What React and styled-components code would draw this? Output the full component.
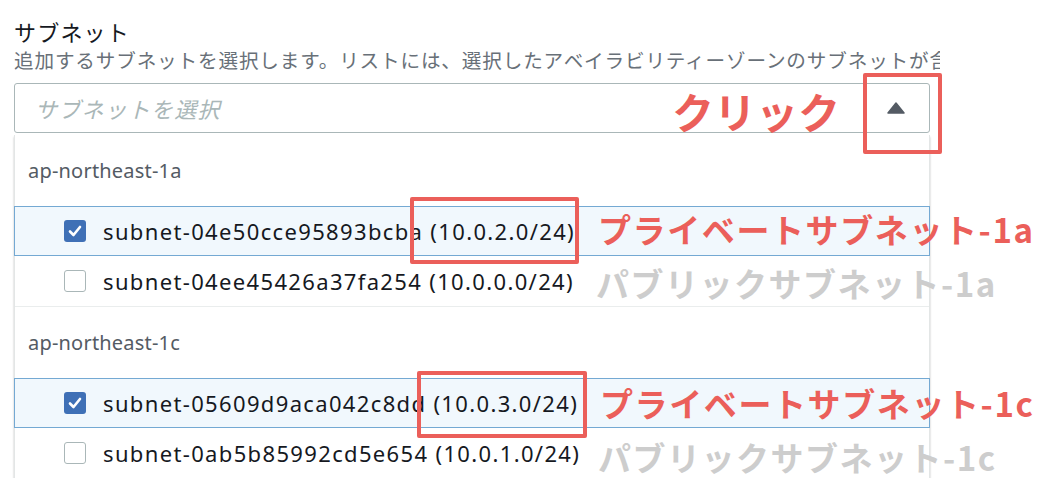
import React from "react";
import styled, { createGlobalStyle } from "styled-components";

const GlobalStyle = createGlobalStyle`
  body {
    margin: 0;
    background: #ffffff;
    font-family: "Noto Sans", "Noto Sans CJK JP", sans-serif;
  }
`;

const Page = styled.div`
  position: relative;
  width: 1046px;
  height: 500px;
  overflow: hidden;
`;

// スクリーンショット部分（右端で切れている）
const Shot = styled.div`
  width: 940px;
  overflow: hidden;
  padding: 17px 0 0 14px;
  box-sizing: border-box;
`;

const Field = styled.div`
  width: 916px;
`;

const Title = styled.div`
  font-size: 22px;
  line-height: 30px;
  color: #16191f;
  letter-spacing: 1.2px;
`;

const Desc = styled.div`
  font-size: 19.6px;
  line-height: 28px;
  color: #687078;
  white-space: nowrap;
  letter-spacing: 0.85px;
`;

const Select = styled.div`
  margin-top: 8px;
  height: 50px;
  border: 1px solid #aab7b8;
  border-radius: 3px;
  box-sizing: border-box;
  display: flex;
  align-items: center;
  justify-content: space-between;
  padding: 0 24px 0 20px;
`;

const Placeholder = styled.span`
  font-style: italic;
  font-size: 22px;
  color: #aab7b8;
  letter-spacing: 1.2px;
`;

const Panel = styled.div`
  margin-top: 2px;
  border-left: 1px solid #e3e6e6;
  border-right: 1px solid #e3e6e6;
  box-shadow: 0 2px 2px rgba(0, 0, 0, 0.25);
  background: #fff;
`;

const Group = styled.div`
  border-top: ${(p) => (p.$first ? "none" : "1px solid #eaeded")};
`;

const GroupHeader = styled.div`
  height: 71px;
  display: flex;
  align-items: center;
  padding-left: 13px;
  font-size: 20px;
  letter-spacing: 0.2px;
  color: #545b64;
`;

const Row = styled.div`
  height: 50px;
  box-sizing: border-box;
  display: flex;
  align-items: center;
  padding-left: 49px;
  margin: 0 -1px;
  border: 1px solid ${(p) => (p.$selected ? "#74a9d3" : "transparent")};
  background: ${(p) => (p.$selected ? "#f1f8fd" : "transparent")};
`;

const Box = styled.span`
  width: 22px;
  height: 22px;
  box-sizing: border-box;
  border-radius: 3px;
  display: flex;
  align-items: center;
  justify-content: center;
  background: ${(p) => (p.$checked ? "#3f70b6" : "#fff")};
  border: ${(p) => (p.$checked ? "none" : "1.5px solid #aab7b8")};
`;

const Label = styled.span`
  margin-left: 17px;
  font-size: 22px;
  letter-spacing: 1.35px;
  color: #16191f;
`;

// 注釈
const Note = styled.div`
  position: absolute;
  left: ${(p) => p.$x}px;
  top: ${(p) => p.$y}px;
  font-family: "Noto Sans CJK JP", sans-serif;
  font-weight: 700;
  font-size: ${(p) => p.$size}px;
  letter-spacing: ${(p) => p.$ls || 0}px;
  line-height: 1;
  color: ${(p) => (p.$gray ? "#cdcdcd" : "#eb5f5a")};
  white-space: nowrap;
`;

const Frame = styled.div`
  position: absolute;
  left: ${(p) => p.$x}px;
  top: ${(p) => p.$y}px;
  width: ${(p) => p.$w}px;
  height: ${(p) => p.$h}px;
  box-sizing: border-box;
  border: 4px solid #eb5f5a;
  border-radius: 2px;
`;

const Check = () => (
  <svg width="16" height="16" viewBox="0 0 16 16">
    <path d="M3 8.5 L6.5 12 L13 4" fill="none" stroke="#fff" strokeWidth="2.6" strokeLinecap="round" strokeLinejoin="round" />
  </svg>
);

const Caret = () => (
  <svg width="18" height="12" viewBox="0 0 18 12">
    <path d="M9 1 L17 11 L1 11 Z" fill="#545b64" stroke="#545b64" strokeWidth="1.5" strokeLinejoin="round" />
  </svg>
);

const groups = [
  {
    zone: "ap-northeast-1a",
    rows: [
      { id: "subnet-04e50cce95893bcba (10.0.2.0/24)", checked: true },
      { id: "subnet-04ee45426a37fa254 (10.0.0.0/24)", checked: false },
    ],
  },
  {
    zone: "ap-northeast-1c",
    rows: [
      { id: "subnet-05609d9aca042c8dd (10.0.3.0/24)", checked: true },
      { id: "subnet-0ab5b85992cd5e654 (10.0.1.0/24)", checked: false },
    ],
  },
];

export default function App() {
  return (
    <Page>
      <GlobalStyle />
      <Shot>
        <Field>
          <Title>サブネット</Title>
          <Desc>
            追加するサブネットを選択します。リストには、選択したアベイラビリティーゾーンのサブネットが含まれます。
          </Desc>
          <Select>
            <Placeholder>サブネットを選択</Placeholder>
            <Caret />
          </Select>
          <Panel>
            {groups.map((g, i) => (
              <Group key={g.zone} $first={i === 0}>
                <GroupHeader>{g.zone}</GroupHeader>
                {g.rows.map((r) => (
                  <Row key={r.id} $selected={r.checked}>
                    <Box $checked={r.checked}>{r.checked && <Check />}</Box>
                    <Label>{r.id}</Label>
                  </Row>
                ))}
              </Group>
            ))}
          </Panel>
        </Field>
      </Shot>

      <Note $x={672} $y={90} $size={42}>クリック</Note>
      <Frame $x={863} $y={73} $w={79} $h={81} />
      <Frame $x={410} $y={197} $w={169} $h={67} />
      <Frame $x={417} $y={371} $w={170} $h={67} />
      <Note $x={598} $y={213} $size={33} $ls={1.6}>プライベートサブネット-1a</Note>
      <Note $x={596} $y={267} $size={33} $ls={1.5} $gray>パブリックサブネット-1a</Note>
      <Note $x={600} $y={387} $size={33} $ls={1.6}>プライベートサブネット-1c</Note>
      <Note $x={598} $y={441} $size={33} $ls={1.5} $gray>パブリックサブネット-1c</Note>
    </Page>
  );
}
